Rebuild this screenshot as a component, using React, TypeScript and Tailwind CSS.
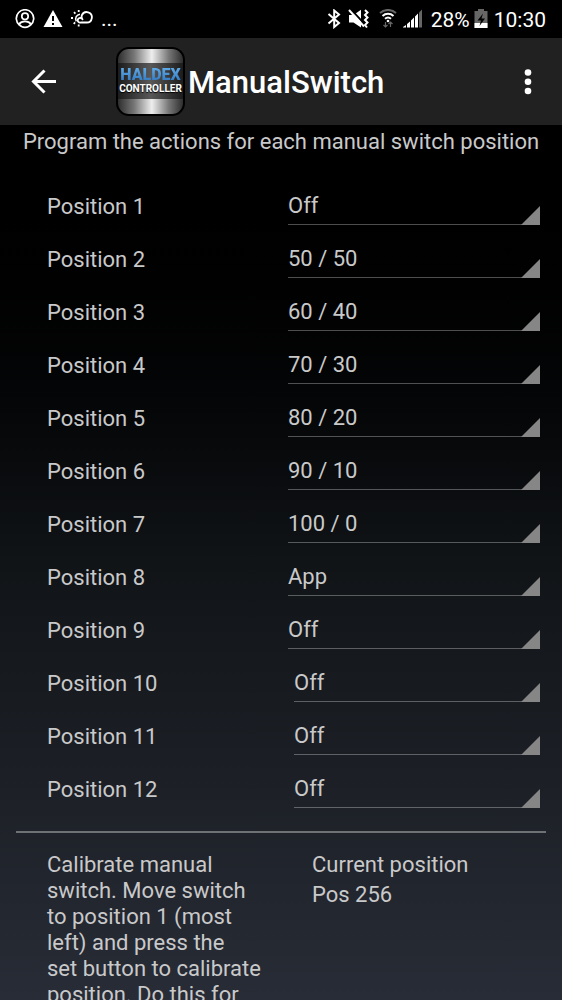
import React from "react";

const modes = [
  "Off",
  "50 / 50",
  "60 / 40",
  "70 / 30",
  "80 / 20",
  "90 / 10",
  "100 / 0",
  "App",
];

const positions = [
  { id: 1, mode: "Off" },
  { id: 2, mode: "50 / 50" },
  { id: 3, mode: "60 / 40" },
  { id: 4, mode: "70 / 30" },
  { id: 5, mode: "80 / 20" },
  { id: 6, mode: "90 / 10" },
  { id: 7, mode: "100 / 0" },
  { id: 8, mode: "App" },
  { id: 9, mode: "Off" },
  { id: 10, mode: "Off" },
  { id: 11, mode: "Off" },
  { id: 12, mode: "Off" },
];

function StatusBar() {
  return (
    <div className="flex h-[38px] shrink-0 items-center justify-between bg-black pl-[15px] pr-4 text-[21px] text-white">
      <div className="flex items-center gap-2">
        <svg className="h-5 w-5" viewBox="0 0 20 20" fill="none" stroke="currentColor" strokeWidth="1.7">
          <path d="M4.5 16.2A8.7 8.7 0 1 1 15.5 16.2" />
          <circle cx="10" cy="7.3" r="3.2" />
          <path d="M4 15.3c1.5-2.3 3.4-2.9 6-2.9s4.5.6 6 2.9c-1.5 2.2-3.6 3.1-6 3.1s-4.5-.9-6-3.1z" />
        </svg>
        <svg className="h-5 w-5" viewBox="0 0 20 20">
          <path d="M10 1 19.500 18H.5z" fill="currentColor" />
          <path d="M9 7h2v5H9zM9 14h2v2H9z" fill="#000" />
        </svg>
        <svg className="h-5 w-[22px]" viewBox="0 0 22 20" fill="none" stroke="currentColor" strokeWidth="1.8">
          <path d="M10.6 9.6a2.300 2.300 0 1 0-1 3.900h6a5.200 5.200 0 1 0-4.700-7.300c-.7 1.800-.2 3.400 1 4.800" />
          <path d="M5.300 12.400C3.600 9 5.500 5.600 9 5.200" strokeWidth="1.500" />
          <path d="M7.700 1v2M3 3.200l1.400 1.400M0 9h2M2.700 14.800l1.400-1.400M7.700 15.500v2" />
        </svg>
        <span>...</span>
      </div>
      <div className="flex items-center">
        <svg className="mr-[7px] h-5 w-[14px]" viewBox="0 0 14 20" fill="none" stroke="currentColor" strokeWidth="2">
          <path d="M1.500 5 12 14 7.200 18V1.500L12 5.500 1.500 14.500" />
        </svg>
        <svg className="mr-2.5 h-5 w-[21px]" viewBox="0 0 21 20">
          <path d="M1 6h4.500L13 .8v17.700L5.500 13.500H1z" fill="currentColor" />
          <path d="M2.500 0 16 14.500" stroke="#000" strokeWidth="2" />
          <path d="M1 1 16 17.500" stroke="currentColor" strokeWidth="2" />
          <path d="m17 1 2.500 2.500L17 6l2.500 2.500L17 11l2.500 2.500L17 16l2 2.500" fill="none" stroke="currentColor" strokeWidth="2" />
        </svg>
        <svg className="mr-1.5 h-5 w-[18px]" viewBox="0 0 18 20" fill="none" strokeWidth="2">
          <path d="M1 4a12 12 0 0 1 16 0" stroke="#666" />
          <path d="M3.500 7a8 8 0 0 1 11 0M6 9.800a4.500 4.500 0 0 1 6 0" stroke="currentColor" />
          <circle cx="9" cy="12" r="1.3" fill="currentColor" />
          <path d="M6.500 13v5M4.500 16l2 2 2-2M11.500 18v-5M9.500 15l2-2 2 2" stroke="#666" strokeWidth="1.2" />
        </svg>
        <svg className="mr-2 h-5 w-5" viewBox="0 0 20 20" fill="currentColor">
          <path d="M0 18.500V18l3-2v2.500zM4 18.500V15l3-2.500v6zM8 18.500v-7l3-3v10zM12 18.500v-11l3-3v14z" />
          <path d="M16 18.500v-15L19 .5v18z" fill="#666" />
        </svg>
        <span className="mr-1 pt-0.5">28%</span>
        <svg className="mr-1.5 h-5 w-[14px]" viewBox="0 0 14 20">
          <path d="M.5 2H4V0h6v2h3.500v17H.5z" fill="#666" />
          <path d="M.5 14h13v5H.5z" fill="#fff" />
          <path d="M9 4.500 3.500 11.500H7L5.500 17l5.500-7.500H7.500z" fill="#000" />
        </svg>
        <span className="pt-0.5">10:30</span>
      </div>
    </div>
  );
}

function Logo() {
  return (
    <div className="flex h-[69px] w-[69px] flex-col overflow-hidden rounded-[13px] border-2 border-black bg-[linear-gradient(to_right,#2e2e2e_0%,#777_25%,#eee_52%,#777_78%,#2e2e2e_100%)] font-bold">
      <div className="mt-[14px] flex h-[36px] flex-col items-center justify-center bg-[linear-gradient(to_right,#1c1c1c,#585858,#1c1c1c)]">
        <span className="bg-linear-to-b from-[#62adea] to-[#2c74bd] bg-clip-text text-[16px] leading-[16px] font-black text-transparent">
          HALDEX
        </span>
        <span className="text-[10px] leading-[12px] text-white [text-shadow:0_1px_1px_#000]">
          CONTROLLER
        </span>
      </div>
    </div>
  );
}

function Header() {
  return (
    <header className="flex h-[87px] shrink-0 items-center bg-[#212121] pl-[31px] pr-[18px] text-white">
      <button aria-label="Back" className="mr-[59px]">
        <svg className="h-[26px] w-[26px]" viewBox="0 0 26 26" fill="none" stroke="currentColor" strokeWidth="3">
          <path d="M25 12.500H2.500M13.500 1.500 2.500 12.500 13.500 23.500" />
        </svg>
      </button>
      <Logo />
      <h1 className="ml-[3px] pt-0.5 text-[31px] font-medium">ManualSwitch</h1>
      <button aria-label="More options" className="ml-auto">
        <svg className="h-[26px] w-8" viewBox="0 0 32 26" fill="currentColor">
          <circle cx="16" cy="3.5" r="3.3" />
          <circle cx="16" cy="12.8" r="3.3" />
          <circle cx="16" cy="22" r="3.3" />
        </svg>
      </button>
    </header>
  );
}

function PositionRow({ id, mode }: { id: number; mode: string }) {
  return (
    <div
      className={`grid h-[53px] ${
        id > 9 ? "grid-cols-[247px_1fr]" : "grid-cols-[241px_1fr]"
      }`}
    >
      <label htmlFor={`position-${id}`} className="self-center">
        Position {id}
      </label>
      <div className="relative h-[45px]">
        <select
          id={`position-${id}`}
          defaultValue={mode}
          className="h-full w-full appearance-none rounded-none border-b border-white/30 bg-transparent pt-[7px] outline-none"
        >
          {modes.map((m) => (
            <option key={m} className="bg-[#212121]">
              {m}
            </option>
          ))}
        </select>
        <svg className="pointer-events-none absolute right-0 bottom-0 h-[19px] w-[19px]" viewBox="0 0 19 19">
          <path d="M19 0v19H0z" fill="#868686" />
        </svg>
      </div>
    </div>
  );
}

export default function App() {
  return (
    <div className="flex h-screen flex-col bg-black font-['Roboto',sans-serif] text-[22px] leading-[26px] text-[#c9c9ca]">
      <StatusBar />
      <Header />
      <main className="min-h-0 flex-1 overflow-y-auto bg-linear-to-b from-black via-[#111417] to-[#282c36] [scrollbar-width:none]">
        <p className="pt-1 text-center">
          Program the actions for each manual switch position
        </p>
        <div className="mt-[25px] pr-[22px] pl-[47px]">
          {positions.map((p) => (
            <PositionRow key={p.id} id={p.id} mode={p.mode} />
          ))}
        </div>
        <hr className="mx-4 mt-[15px] border-t-2 border-[#6f7275]" />
        <div className="mt-[19px] grid grid-cols-[215px_1fr] gap-[50px] pr-[22px] pl-[47px]">
          <p>
            Calibrate manual switch. Move switch to position 1 (most left) and
            press the set&nbsp;button to calibrate position. Do this for
          </p>
          <div className="flex flex-col gap-1">
            <p>Current position</p>
            <p>Pos 256</p>
          </div>
        </div>
      </main>
    </div>
  );
}
